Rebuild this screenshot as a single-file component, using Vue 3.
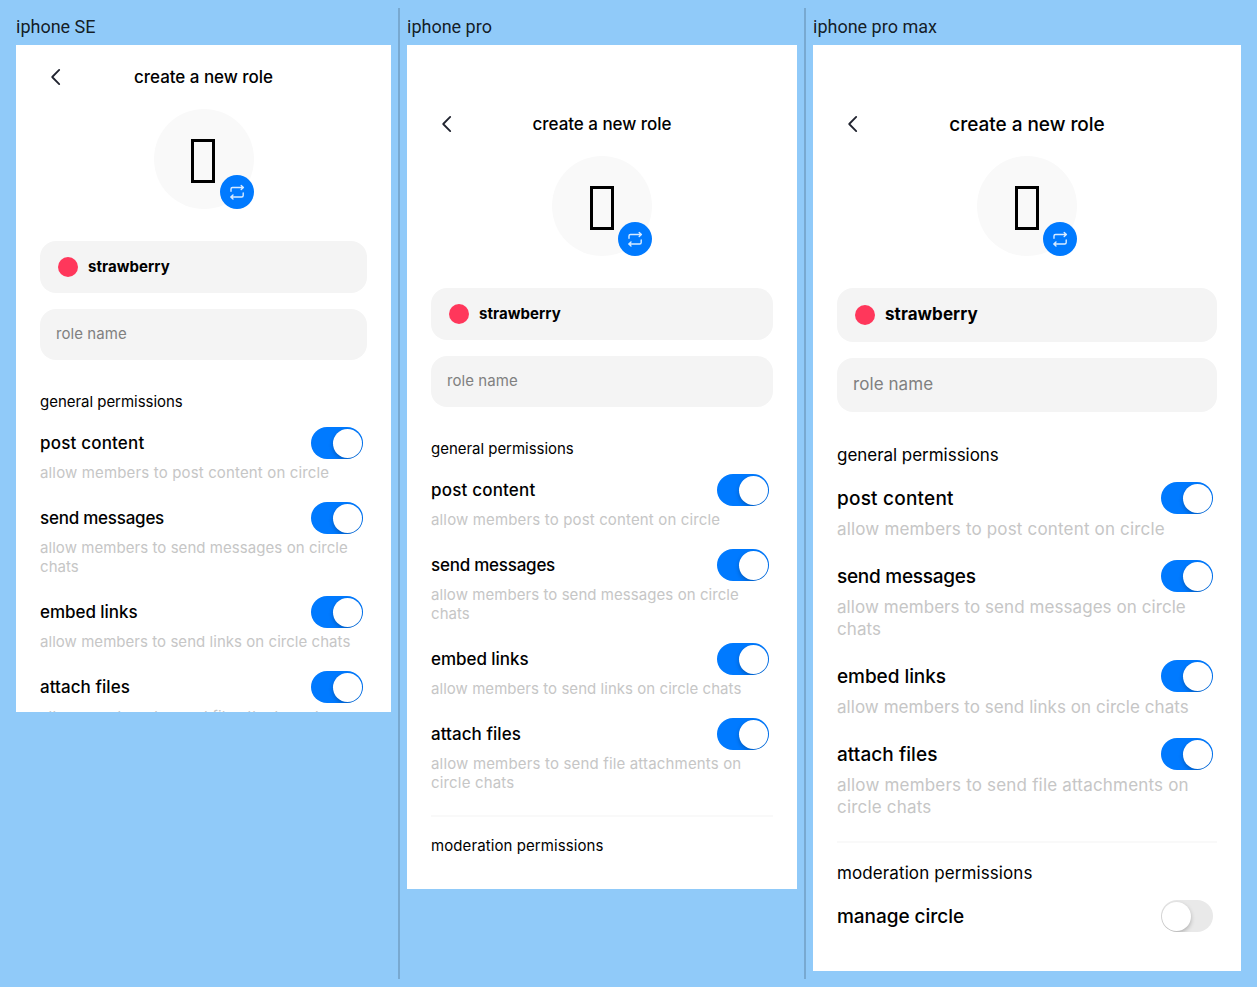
<script setup>
const general = {
  name: 'general permissions',
  track: -0.002,
  items: [
    { title: 'post content', track: 0.011, text: 'allow members to post content on circle', textTrack: 0.01, on: true },
    { title: 'send messages', track: -0.014, text: 'allow members to send messages on circle chats', textTrack: 0.004, on: true },
    { title: 'embed links', track: -0.003, text: 'allow members to send links on circle chats', textTrack: 0.003, on: true },
    { title: 'attach files', track: 0.003, text: 'allow members to send file attachments on circle chats', textTrack: 0.011, on: true },
  ],
}
const moderation = {
  name: 'moderation permissions',
  track: 0.006,
  items: [{ title: 'manage circle', track: -0.002, on: false }],
}
const phones = [
  { name: 'iphone SE', kind: 'se', sections: [general] },
  { name: 'iphone pro', kind: 'pro', sections: [general, { ...moderation, items: [] }] },
  { name: 'iphone pro max', kind: 'max', sections: [general, moderation] },
]
</script>

<template>
  <main class="board">
    <section v-for="phone in phones" :key="phone.kind" class="device" :class="phone.kind">
      <h2 class="label">{{ phone.name }}</h2>
      <div class="screen">
        <header class="bar">
          <svg class="back" width="24" height="24" viewBox="0 0 24 24">
            <path d="M16.2 4.9 L9.2 12 L16.2 19.1" />
          </svg>
          <span class="heading">create a new role</span>
        </header>

        <div class="avatar">
          <span class="emoji"></span>
          <span class="swap">
            <svg width="34" height="34" viewBox="0 0 34 34">
              <path d="M11 16.3V14Q11 12.5 12.5 12.5H23.3M21.2 10.4L23.4 12.5L21.2 14.6" />
              <path d="M23.2 18V20.5Q23.2 22 21.7 22H10.9M13 19.9L10.8 22L13 24.1" />
            </svg>
          </span>
        </div>

        <div class="field color">
          <span class="dot"></span>
          <span class="color-name">strawberry</span>
        </div>
        <div class="field name">role name</div>

        <div v-for="section in phone.sections" :key="section.name" class="section">
          <h3 class="section-name" :style="{ letterSpacing: section.track + 'em' }">{{ section.name }}</h3>
          <div v-for="item in section.items" :key="item.title" class="item">
            <div class="row">
              <span class="item-title" :style="{ letterSpacing: item.track + 'em' }">{{ item.title }}</span>
              <span class="toggle" :class="{ on: item.on }"><i class="knob"></i></span>
            </div>
            <p v-if="item.text" class="note" :style="{ letterSpacing: item.textTrack + 'em' }">{{ item.text }}</p>
          </div>
        </div>
      </div>
    </section>
  </main>
</template>

<style>
body {
  background: #90caf9;
  overflow: hidden;
}
</style>

<style scoped>
.board {
  display: flex;
  height: 987px;
  box-sizing: border-box;
  padding: 8px;
  background: #90caf9;
  color: #000;
  font-family: Inter, "Liberation Sans", sans-serif;
}
.device {
  box-sizing: border-box;
  height: 971px;
  flex: none;
}
.label {
  margin: 0;
  height: 37px;
  font: 400 18px/38px Roboto, sans-serif;
  color: rgba(0, 0, 0, 0.87);
}
.se {
  --safe: 0px;
  --w: 375px;
  --h: 667px;
  padding: 0 7px 0 8px;
  border-right: 2px solid #78a9d1;
}
.pro {
  --safe: 47px;
  --w: 390px;
  --h: 844px;
  padding: 0 7px;
  border-right: 2px solid #78a9d1;
}
.max {
  --safe: 47px;
  --w: 428px;
  --h: 926px;
  padding: 0 7px;
}
.se,
.pro {
  --small: 15px;
  --large: 17px;
  --line: 19px;
  --lift: 1px;
  --field-a: 52px;
  --field-b: 51px;
}
.max {
  --small: 17px;
  --large: 19px;
  --line: 22px;
  --lift: 0px;
  --field-a: 54px;
  --field-b: 54px;
}
.screen {
  box-sizing: border-box;
  width: var(--w);
  height: var(--h);
  padding: var(--safe) 24px 0;
  background: #fff;
  overflow: hidden;
}
.bar {
  display: grid;
  grid-template-columns: 32px 1fr 32px;
  align-items: center;
  height: 64px;
}
.back {
  margin-left: 3px;
  fill: none;
  stroke: #20232f;
  stroke-width: 1.8;
  stroke-linecap: round;
  stroke-linejoin: round;
}
.heading {
  padding-bottom: var(--lift);
  text-align: center;
  font-size: var(--large);
  font-weight: 500;
  letter-spacing: -0.002em;
  white-space: nowrap;
}
.avatar {
  position: relative;
  display: flex;
  align-items: center;
  justify-content: center;
  width: 100px;
  height: 100px;
  margin: 0 auto 32px;
  border-radius: 50%;
  background: #f9f9f9;
}
.emoji {
  box-sizing: border-box;
  width: 24px;
  height: 44px;
  margin-top: 3px;
  border: 3px solid #000;
}
.se .emoji {
  margin-right: 1px;
}
.swap {
  position: absolute;
  right: 0;
  bottom: 0;
  width: 34px;
  height: 34px;
  border-radius: 50%;
  background: #007aff;
}
.swap svg {
  display: block;
  fill: none;
  stroke: #fff;
  stroke-opacity: 0.85;
  stroke-width: 1.4;
  stroke-linecap: round;
  stroke-linejoin: round;
}
.field {
  display: flex;
  align-items: center;
  box-sizing: border-box;
  border-radius: 16px;
  background: #f4f4f4;
  font-size: var(--small);
  letter-spacing: 0.004em;
}
.color {
  height: var(--field-a);
  margin-bottom: 16px;
  padding: 0 18px;
  gap: 10px;
}
.name {
  height: var(--field-b);
  padding: 0 16px 2px;
  color: #808080;
}
.dot {
  width: 20px;
  height: 20px;
  border-radius: 50%;
  background: #ff375b;
}
.color-name {
  padding-bottom: 2px;
  font-weight: 700;
}
.section {
  margin-top: 32px;
}
.section + .section {
  margin-top: 3px;
  padding-top: 19px;
  border-top: 2px solid #f9f9f9;
}
.section-name {
  margin: 0 0 16px;
  font-size: var(--small);
  font-weight: 400;
  line-height: var(--line);
}
.item {
  padding-bottom: 20px;
}
.row {
  display: flex;
  align-items: center;
  justify-content: space-between;
  height: 32px;
  margin-bottom: 4px;
  padding-right: 4px;
}
.item-title {
  padding-bottom: var(--lift);
  font-size: var(--large);
  font-weight: 500;
}
.note {
  margin: 0;
  font-size: var(--small);
  line-height: var(--line);
  color: #c6c6c6;
}
.toggle {
  display: flex;
  align-items: center;
  box-sizing: border-box;
  width: 52.5px;
  height: 32px;
  padding: 0 1.5px;
  border-radius: 16px;
  background: #e9e9e9;
  overflow: hidden;
}
.toggle.on {
  justify-content: flex-end;
  background: #007aff;
}
.knob {
  width: 29px;
  height: 29px;
  border-radius: 50%;
  background: #fff;
  box-shadow: 0 2px 4px rgba(0, 0, 0, 0.25);
}
</style>
